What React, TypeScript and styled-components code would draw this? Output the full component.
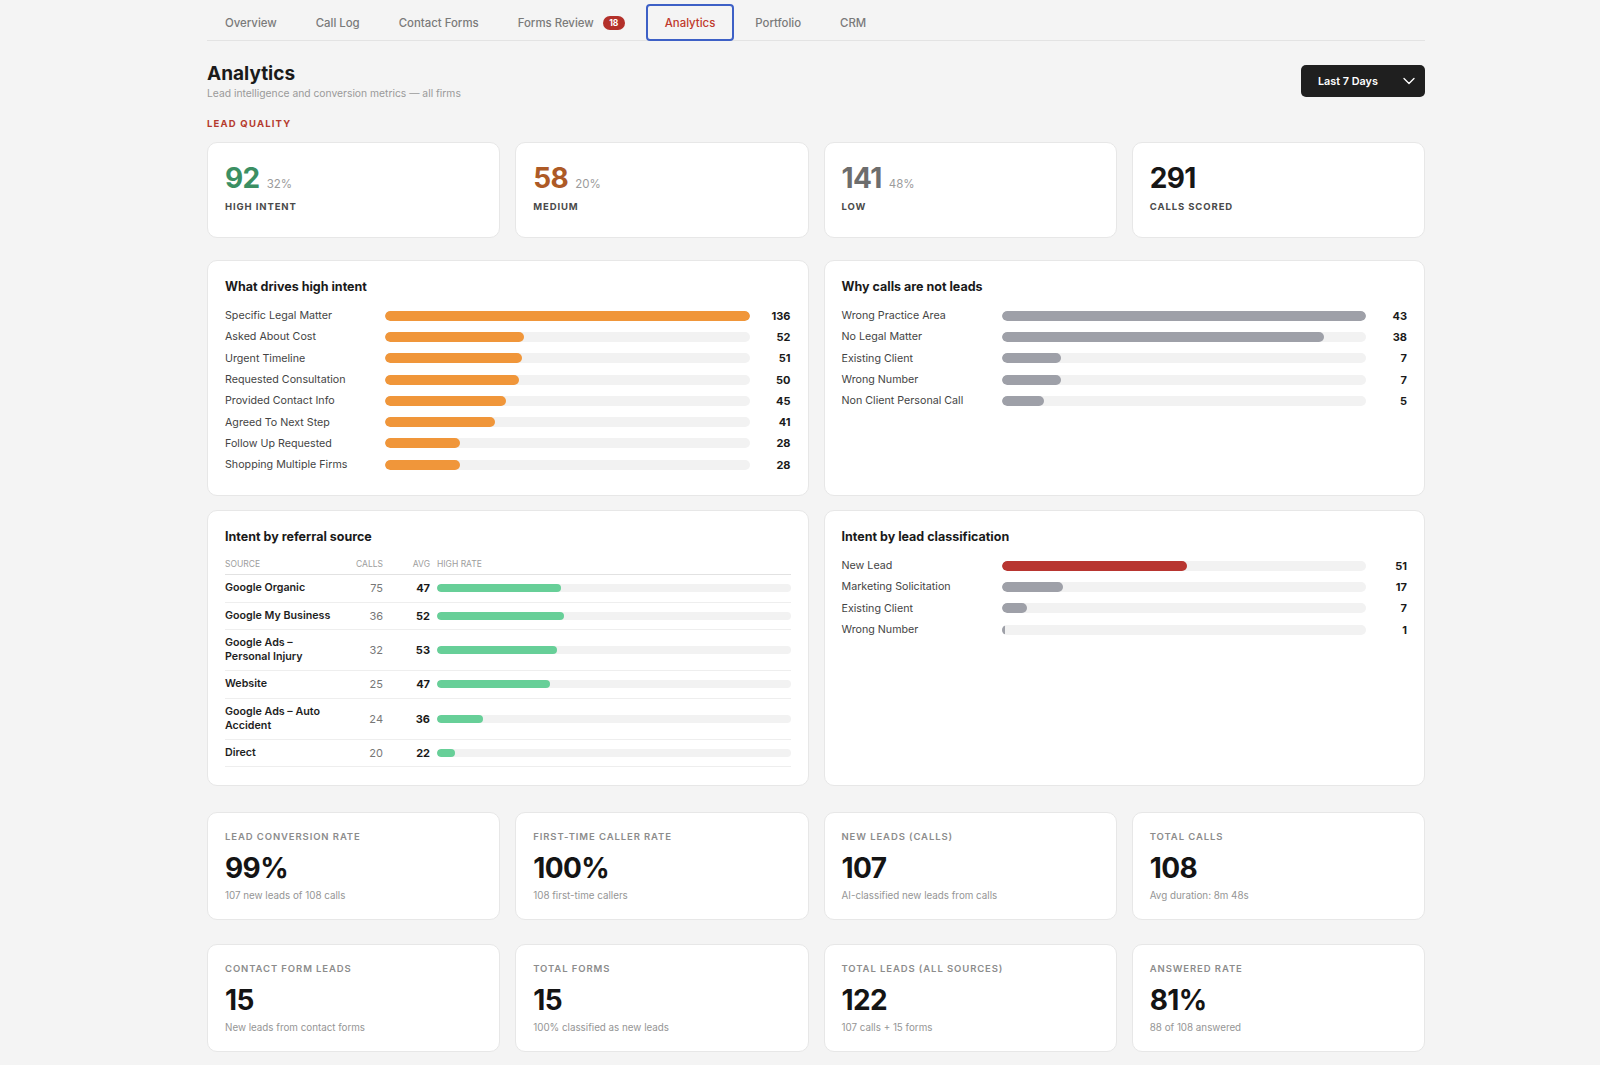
import React from "react";
import styled, { createGlobalStyle } from "styled-components";
import { ChevronDown } from "lucide-react";

const GlobalStyle = createGlobalStyle`
  body {
    margin: 0;
    background: #f4f4f4;
    font-family: Inter, "Noto Sans", sans-serif;
    color: #1a1a1a;
  }
`;

const Page = styled.main`
  width: 1218px;
  margin-left: 207px;
  padding-bottom: 14px;
`;

/* ---------- tabs ---------- */

const TabBar = styled.nav`
  display: flex;
  align-items: flex-end;
  gap: 3px;
  height: 41px;
  box-sizing: border-box;
  border-bottom: 1px solid #e3e3e3;
`;

const Tab = styled.div<{ $active?: boolean }>`
  display: flex;
  align-items: center;
  gap: 9px;
  height: 37px;
  margin-bottom: -1px;
  padding: 0 ${(p) => (p.$active ? 17 : 16)}px;
  box-sizing: border-box;
  border: 2px solid ${(p) => (p.$active ? "#3d60c6" : "transparent")};
  border-radius: 4px;
  font-size: 11.4px;
  font-weight: 500;
  color: ${(p) => (p.$active ? "#c0392b" : "#7a7a7a")};
`;

const Badge = styled.span`
  display: inline-flex;
  align-items: center;
  justify-content: center;
  min-width: 22px;
  height: 14px;
  border-radius: 7px;
  background: #b3302a;
  color: #fff;
  font-size: 8.5px;
  font-weight: 700;
`;

/* ---------- header ---------- */

const Header = styled.header`
  display: flex;
  justify-content: space-between;
  align-items: center;
  margin-top: 21px;
`;

const Title = styled.h1`
  margin: 0;
  font-size: 19px;
  line-height: 24px;
  font-weight: 700;
`;

const Subtitle = styled.p`
  margin: 0;
  font-size: 10.3px;
  line-height: 14px;
  color: #9a9a9a;
`;

const RangeSelect = styled.button`
  display: flex;
  align-items: center;
  justify-content: space-between;
  width: 124px;
  height: 32px;
  padding: 0 6px 0 17px;
  border: none;
  border-radius: 5px;
  background: #1f1f1f;
  color: #fff;
  font-family: inherit;
  font-size: 10.8px;
  font-weight: 600;
`;

const SectionLabel = styled.div`
  margin: 16px 0 11px;
  font-size: 9.5px;
  line-height: 15px;
  font-weight: 700;
  letter-spacing: 1.2px;
  color: #b53a2d;
`;

/* ---------- cards ---------- */

const Card = styled.section`
  background: #fff;
  border: 1px solid #e7e7e7;
  border-radius: 10px;
  box-sizing: border-box;
`;

const QuadRow = styled.div<{ $gap?: number }>`
  display: grid;
  grid-template-columns: repeat(4, 1fr);
  gap: 15px;
  margin-bottom: ${(p) => p.$gap ?? 0}px;
`;

const ScoreCard = styled(Card)`
  height: 96px;
  padding: 18px 17px 0;
`;

const ScoreLine = styled.div`
  display: flex;
  align-items: baseline;
  gap: 7px;
`;

const ScoreValue = styled.span<{ $color: string }>`
  font-size: 28px;
  line-height: 34px;
  font-weight: 700;
  letter-spacing: -0.6px;
  color: ${(p) => p.$color};
`;

const ScorePct = styled.span`
  font-size: 11.5px;
  color: #9b9b9b;
`;

const ScoreLabel = styled.div`
  margin-top: 5px;
  font-size: 9.5px;
  line-height: 13px;
  font-weight: 700;
  letter-spacing: 0.9px;
  color: #4a4a4a;
`;

const PanelGrid = styled.div<{ $gap: number }>`
  display: grid;
  grid-template-columns: 1fr 1fr;
  gap: 14px 15px;
  margin-bottom: ${(p) => p.$gap}px;
`;

const Panel = styled(Card)<{ $height: number }>`
  height: ${(p) => p.$height}px;
  padding: 18px 17px;
`;

const PanelTitle = styled.h3`
  margin: 0 0 10px;
  font-size: 12.5px;
  line-height: 16px;
  font-weight: 700;
  color: #1a1a1a;
`;

const BarRow = styled.div`
  display: grid;
  grid-template-columns: 160px 1fr 41px;
  align-items: center;
  height: 21.3px;
`;

const BarLabel = styled.span`
  font-size: 10.7px;
  color: #444;
  white-space: nowrap;
`;

const BarValue = styled.span`
  text-align: right;
  font-size: 11px;
  font-weight: 700;
  color: #1a1a1a;
`;

const Track = styled.div<{ $h?: number }>`
  height: ${(p) => p.$h ?? 10}px;
  border-radius: 5px;
  background: #f2f2f2;
  overflow: hidden;
`;

const Fill = styled.div<{ $color: string }>`
  height: 100%;
  border-radius: 5px;
  background: ${(p) => p.$color};
`;

/* ---------- referral table ---------- */

const TableRow = styled.div<{ $head?: boolean }>`
  display: grid;
  grid-template-columns: 118px 40px 47px 1fr;
  align-items: center;
  min-height: ${(p) => (p.$head ? 20 : 27.5)}px;
  padding: ${(p) => (p.$head ? "0 0 2px" : "6px 0")};
  box-sizing: border-box;
  border-bottom: 1px solid ${(p) => (p.$head ? "#e2e2e2" : "#eeeeee")};
`;

const HeadCell = styled.span<{ $right?: boolean }>`
  font-size: 8.5px;
  color: #9d9d9d;
  text-transform: uppercase;
  text-align: ${(p) => (p.$right ? "right" : "left")};
`;

const HeadRate = styled(HeadCell)`
  padding-left: 7px;
`;

const SourceName = styled.span`
  font-size: 10.7px;
  line-height: 14px;
  font-weight: 600;
  color: #1e1e1e;
  padding-right: 4px;
`;

const Calls = styled.span`
  font-size: 11px;
  color: #777;
  text-align: right;
`;

const Avg = styled.span`
  font-size: 11px;
  font-weight: 700;
  text-align: right;
`;

const RateCell = styled.div`
  padding-left: 7px;
`;

/* ---------- metric cards ---------- */

const MetricCard = styled(Card)`
  height: 108px;
  padding: 17px 17px 0;
`;

const MetricLabel = styled.div`
  font-size: 9.5px;
  line-height: 13px;
  font-weight: 600;
  letter-spacing: 0.9px;
  color: #8c8c8c;
`;

const MetricValue = styled.div`
  margin-top: 8px;
  font-size: 28px;
  line-height: 34px;
  font-weight: 700;
  letter-spacing: -0.6px;
  color: #141414;
`;

const MetricSub = styled.div`
  margin-top: 4px;
  font-size: 9.8px;
  line-height: 14px;
  color: #959595;
`;

/* ---------- data ---------- */

const tabs = ["Overview", "Call Log", "Contact Forms", "Forms Review", "Analytics", "Portfolio", "CRM"];

const scores = [
  { value: 92, pct: "32%", label: "HIGH INTENT", color: "#3b8f63" },
  { value: 58, pct: "20%", label: "MEDIUM", color: "#ad5a26" },
  { value: 141, pct: "48%", label: "LOW", color: "#6d6d6d" },
  { value: 291, pct: "", label: "CALLS SCORED", color: "#161616" },
];

const drivers = [
  ["Specific Legal Matter", 136],
  ["Asked About Cost", 52],
  ["Urgent Timeline", 51],
  ["Requested Consultation", 50],
  ["Provided Contact Info", 45],
  ["Agreed To Next Step", 41],
  ["Follow Up Requested", 28],
  ["Shopping Multiple Firms", 28],
] as const;

const notLeads = [
  ["Wrong Practice Area", 43],
  ["No Legal Matter", 38],
  ["Existing Client", 7],
  ["Wrong Number", 7],
  ["Non Client Personal Call", 5],
] as const;

const sources = [
  { name: "Google Organic", calls: 75, avg: 47, rate: 35 },
  { name: "Google My Business", calls: 36, avg: 52, rate: 36 },
  { name: "Google Ads – Personal Injury", calls: 32, avg: 53, rate: 34 },
  { name: "Website", calls: 25, avg: 47, rate: 32 },
  { name: "Google Ads – Auto Accident", calls: 24, avg: 36, rate: 13 },
  { name: "Direct", calls: 20, avg: 22, rate: 5 },
];

const classes = [
  { name: "New Lead", value: 51, color: "#b83530" },
  { name: "Marketing Solicitation", value: 17, color: "#9ea0a8" },
  { name: "Existing Client", value: 7, color: "#9ea0a8" },
  { name: "Wrong Number", value: 1, color: "#9ea0a8" },
];

const metrics = [
  { label: "LEAD CONVERSION RATE", value: "99%", sub: "107 new leads of 108 calls" },
  { label: "FIRST-TIME CALLER RATE", value: "100%", sub: "108 first-time callers" },
  { label: "NEW LEADS (CALLS)", value: "107", sub: "AI-classified new leads from calls" },
  { label: "TOTAL CALLS", value: "108", sub: "Avg duration: 8m 48s" },
  { label: "CONTACT FORM LEADS", value: "15", sub: "New leads from contact forms" },
  { label: "TOTAL FORMS", value: "15", sub: "100% classified as new leads" },
  { label: "TOTAL LEADS (ALL SOURCES)", value: "122", sub: "107 calls + 15 forms" },
  { label: "ANSWERED RATE", value: "81%", sub: "88 of 108 answered" },
];

const Bar: React.FC<{ label: string; value: number; ratio: number; color: string }> = ({
  label,
  value,
  ratio,
  color,
}) => (
  <BarRow>
    <BarLabel>{label}</BarLabel>
    <Track>
      <Fill $color={color} style={{ width: `${ratio * 100}%` }} />
    </Track>
    <BarValue>{value}</BarValue>
  </BarRow>
);

const Metric: React.FC<{ label: string; value: string; sub: string }> = ({ label, value, sub }) => (
  <MetricCard>
    <MetricLabel>{label}</MetricLabel>
    <MetricValue>{value}</MetricValue>
    <MetricSub>{sub}</MetricSub>
  </MetricCard>
);

export default function App() {
  return (
    <>
      <GlobalStyle />
      <Page>
        <TabBar>
          {tabs.map((t) => (
            <Tab key={t} $active={t === "Analytics"}>
              {t}
              {t === "Forms Review" && <Badge>18</Badge>}
            </Tab>
          ))}
        </TabBar>

        <Header>
          <div>
            <Title>Analytics</Title>
            <Subtitle>Lead intelligence and conversion metrics — all firms</Subtitle>
          </div>
          <RangeSelect>
            Last 7 Days
            <ChevronDown size={20} strokeWidth={1.6} />
          </RangeSelect>
        </Header>

        <SectionLabel>LEAD QUALITY</SectionLabel>
        <QuadRow $gap={22}>
          {scores.map((s) => (
            <ScoreCard key={s.label}>
              <ScoreLine>
                <ScoreValue $color={s.color}>{s.value}</ScoreValue>
                {s.pct && <ScorePct>{s.pct}</ScorePct>}
              </ScoreLine>
              <ScoreLabel>{s.label}</ScoreLabel>
            </ScoreCard>
          ))}
        </QuadRow>

        <PanelGrid $gap={26}>
          <Panel $height={236}>
            <PanelTitle>What drives high intent</PanelTitle>
            {drivers.map(([label, v]) => (
              <Bar key={label} label={label} value={v} ratio={v / 136} color="#f0963a" />
            ))}
          </Panel>
          <Panel $height={236}>
            <PanelTitle>Why calls are not leads</PanelTitle>
            {notLeads.map(([label, v]) => (
              <Bar key={label} label={label} value={v} ratio={v / 43} color="#9ea0a8" />
            ))}
          </Panel>

          <Panel $height={276}>
            <PanelTitle>Intent by referral source</PanelTitle>
            <TableRow $head>
              <HeadCell>Source</HeadCell>
              <HeadCell $right>Calls</HeadCell>
              <HeadCell $right>Avg</HeadCell>
              <HeadRate>High rate</HeadRate>
            </TableRow>
            {sources.map((s) => (
              <TableRow key={s.name}>
                <SourceName>{s.name}</SourceName>
                <Calls>{s.calls}</Calls>
                <Avg>{s.avg}</Avg>
                <RateCell>
                  <Track $h={8}>
                    <Fill $color="#67cf98" style={{ width: `${s.rate}%` }} />
                  </Track>
                </RateCell>
              </TableRow>
            ))}
          </Panel>
          <Panel $height={276}>
            <PanelTitle>Intent by lead classification</PanelTitle>
            {classes.map((c) => (
              <Bar key={c.name} label={c.name} value={c.value} ratio={c.value / 100} color={c.color} />
            ))}
          </Panel>
        </PanelGrid>

        <QuadRow $gap={24}>
          {metrics.slice(0, 4).map((m) => (
            <Metric key={m.label} {...m} />
          ))}
        </QuadRow>
        <QuadRow>
          {metrics.slice(4).map((m) => (
            <Metric key={m.label} {...m} />
          ))}
        </QuadRow>
      </Page>
    </>
  );
}
